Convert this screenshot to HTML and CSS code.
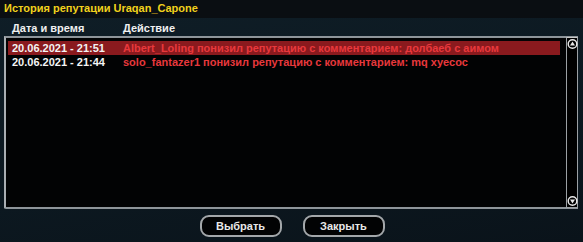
FILE: index.html
```html
<!DOCTYPE html>
<html>
<head>
<meta charset="utf-8">
<link rel="stylesheet" href="styles.css">
</head>
<body>
<div class="win">
  <div class="title">История репутации Uraqan_Capone</div>
  <div class="header">
    <span class="c-date">Дата и время</span>
    <span class="c-act">Действие</span>
  </div>
  <div class="box">
    <div class="list">
      <div class="row sel">
        <span class="c-date">20.06.2021 - 21:51</span>
        <span class="c-act red">Albert_Loling понизил репутацию с комментарием: долбаеб с аимом</span>
      </div>
      <div class="row">
        <span class="c-date">20.06.2021 - 21:44</span>
        <span class="c-act red">solo_fantazer1 понизил репутацию с комментарием: mq хуесос</span>
      </div>
    </div>
    <div class="scroll">
      <svg class="arrow" width="11" height="10" viewBox="0 0 11 10"><circle cx="5.5" cy="5" r="4.3" fill="none" stroke="#e8e8e8" stroke-width="1.4"/><path d="M5.5 2.6 L8 6.6 L3 6.6 Z" fill="#e8e8e8"/></svg>
      <div class="track"></div>
      <svg class="arrow" width="11" height="10" viewBox="0 0 11 10"><circle cx="5.5" cy="5" r="4.3" fill="none" stroke="#e8e8e8" stroke-width="1.4"/><path d="M5.5 7.4 L8 3.4 L3 3.4 Z" fill="#e8e8e8"/></svg>
    </div>
  </div>
  <div class="buttons">
    <div class="btn">Выбрать</div>
    <div class="btn">Закрыть</div>
  </div>
</div>
</body>
</html>
```
FILE: styles.css
```css
html, body {
  margin: 0;
  padding: 0;
}
body {
  width: 583px;
  height: 242px;
  overflow: hidden;
  font-family: "Liberation Sans", Arial, sans-serif;
  font-weight: bold;
  font-size: 11px;
}
.win {
  width: 583px;
  height: 242px;
  display: flex;
  flex-direction: column;
  background: linear-gradient(170deg, #0f1e27 0%, #0c1820 60%, #0a131a 100%);
}
.title {
  height: 18px;
  line-height: 17px;
  padding-left: 4px;
  background: #0a0e12;
  color: #f2d21c;
}
.header {
  height: 18px;
  line-height: 20px;
  display: flex;
  color: #f0f0f0;
  padding-left: 12px;
}
.c-date {
  width: 111px;
  flex: none;
  white-space: nowrap;
}
.c-act {
  white-space: nowrap;
}
.box {
  height: 169px;
  margin: 0 5px 0 4px;
  display: flex;
  border-top: 2px solid #8e959a;
  border-left: 2px solid #a9aeb2;
  border-bottom: 2px solid #8e959a;
  border-bottom-left-radius: 2px;
  background: #020304;
}
.list {
  flex: 1;
  padding: 3px 6px 0 2px;
}
.row {
  height: 13px;
  line-height: 14px;
  display: flex;
  padding-left: 4px;
  color: #f4f4f4;
}
.row.sel {
  background: #8a1a1e;
  height: 14px;
}
.red {
  color: #e8383c;
}
.scroll {
  width: 10px;
  flex: none;
  display: flex;
  flex-direction: column;
  align-items: center;
  border: 1px solid #9ba0a4;
  border-top-color: #c8c8c8;
  margin-top: -1px;
  margin-bottom: -1px;
  padding: 1px 0;
  background: #000;
}
.arrow {
  flex: none;
  display: block;
}
.track {
  flex: 1;
}
.buttons {
  flex: 1;
  display: flex;
  justify-content: center;
  align-items: flex-start;
  gap: 21px;
  padding-top: 6px;
  padding-left: 1px;
}
.btn {
  width: 78px;
  height: 18px;
  line-height: 18px;
  text-align: center;
  border: 2px solid #a3a7aa;
  border-radius: 9px;
  background: #020304;
  color: #e8e8e8;
}
```
